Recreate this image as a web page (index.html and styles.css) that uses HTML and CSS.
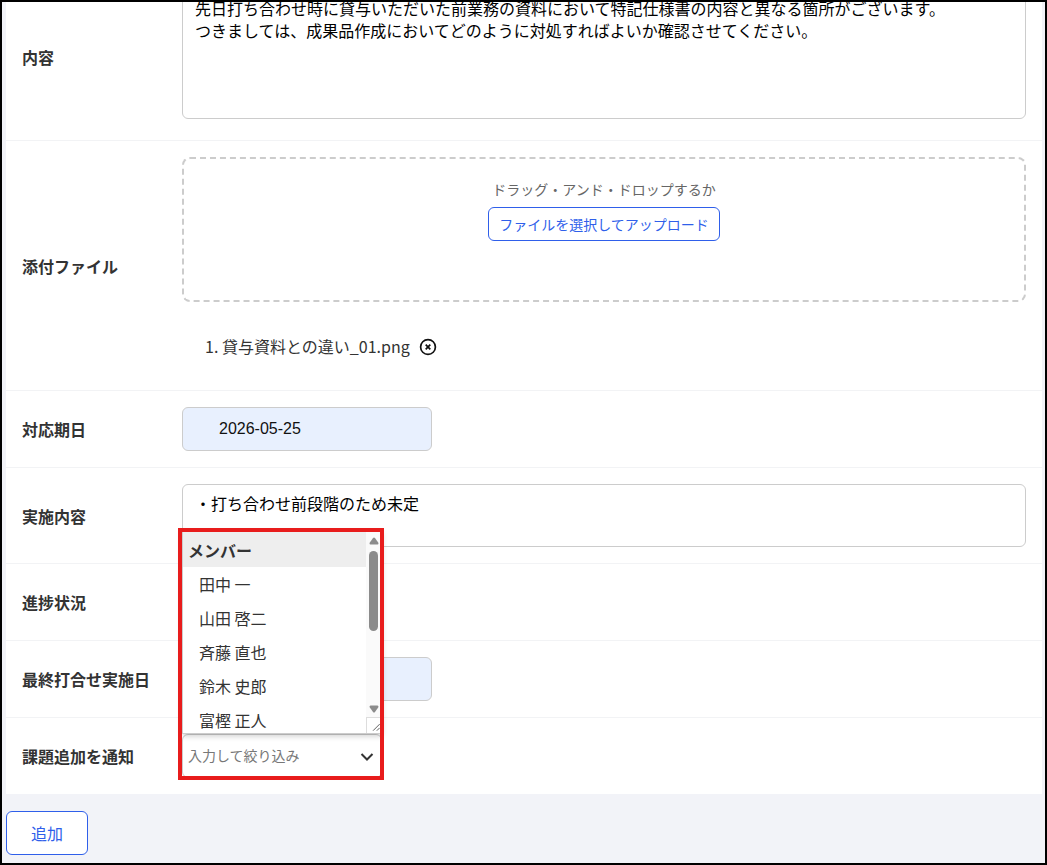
FILE: index.html
```html
<!DOCTYPE html>
<html lang="ja">
<head>
  <meta charset="UTF-8" />
  <meta name="viewport" content="width=device-width, initial-scale=1.0"/>
  <title>課題追加</title>
  <link rel="stylesheet" href="styles.css">
</head>
<body>

  <form class="issue-form">
    <div class="rows">

      <!-- Content -->
      <div class="row row-content">
        <label class="row-label" for="content">内容</label>
        <div class="row-field">
          <textarea id="content" class="text-area text-area-large">先日打ち合わせ時に貸与いただいた前業務の資料において特記仕様書の内容と異なる箇所がございます。
つきましては、成果品作成においてどのように対処すればよいか確認させてください。</textarea>
        </div>
      </div>

      <!-- Attachments -->
      <div class="row">
        <div class="row-label">添付ファイル</div>
        <div class="row-field">
          <div class="drop-zone">
            <span>ドラッグ・アンド・ドロップするか</span>
            <button type="button" class="btn btn-small">ファイルを選択してアップロード</button>
          </div>
          <ol class="file-list">
            <li>貸与資料との違い_01.png<button type="button" class="file-remove" aria-label="削除"><svg width="18" height="18" viewBox="0 0 18 18" fill="none" stroke="#111" stroke-width="1.7"><circle cx="9" cy="9" r="7.4"/><path d="M6.7 6.7l4.6 4.6M11.3 6.7l-4.6 4.6"/></svg></button></li>
          </ol>
        </div>
      </div>

      <!-- Due date -->
      <div class="row">
        <label class="row-label" for="due">対応期日</label>
        <div class="row-field">
          <input id="due" class="date-input" type="text" value="2026-05-25">
        </div>
      </div>

      <!-- Action -->
      <div class="row">
        <label class="row-label" for="action">実施内容</label>
        <div class="row-field">
          <textarea id="action" class="text-area">・打ち合わせ前段階のため未定</textarea>
        </div>
      </div>

      <!-- Progress -->
      <div class="row">
        <div class="row-label">進捗状況</div>
        <div class="row-field"></div>
      </div>

      <!-- Last meeting -->
      <div class="row">
        <label class="row-label" for="meeting">最終打合せ実施日</label>
        <div class="row-field">
          <input id="meeting" class="date-input" type="text">
        </div>
      </div>

      <!-- Notify -->
      <div class="row">
        <label class="row-label" for="notify">課題追加を通知</label>
        <div class="row-field">
          <div class="combo">
            <input id="notify" class="combo-input" type="text" placeholder="入力して絞り込み">
            <svg class="combo-arrow" width="14" height="10" viewBox="0 0 14 10" fill="none" stroke="#333" stroke-width="2"><path d="M1.5 2L7 7.5L12.5 2"/></svg>

            <div class="combo-list">
              <ul role="listbox" aria-label="メンバー">
                <li class="group">メンバー</li>
                <li role="option">田中 一</li>
                <li role="option">山田 啓二</li>
                <li role="option">斉藤 直也</li>
                <li role="option">鈴木 史郎</li>
                <li role="option">富樫 正人</li>
              </ul>
              <div class="scrollbar">
                <svg width="10" height="8" viewBox="0 0 10 8" fill="#8b8b8b"><path d="M4 1Q5 0 6 1L9.5 6Q9.5 7.5 8.5 7.5H1.5Q.5 7.5 .5 6Z"/></svg>
                <div class="thumb"></div>
                <svg width="10" height="8" viewBox="0 0 10 8" fill="#8b8b8b"><path d="M4 7Q5 8 6 7L9.5 2Q9.5 .5 8.5 .5H1.5Q.5 .5 .5 2Z"/></svg>
                <svg class="resizer" width="16" height="16" viewBox="0 0 16 16" fill="none" stroke="#555"><path d="M6.5 13.5L13.5 6.5M10.5 13.5L13.5 10.5"/></svg>
              </div>
            </div>
            <div class="highlight"></div>
          </div>
        </div>
      </div>

    </div>

    <button type="submit" class="btn btn-add">追加</button>
  </form>

</body>
</html>
```

FILE: styles.css
```css
* {
  margin: 0;
  padding: 0;
  box-sizing: border-box;
}

body {
  font-family: "Noto Sans CJK JP", sans-serif;
  font-size: 16px;
  line-height: 24px;
  color: #333;
  background-color: #f2f3f8;
  height: 100vh;
  border: 2px solid #000;
  overflow: hidden;
}

input,
textarea,
button {
  font-family: inherit;
  font-size: 16px;
}

.issue-form {
  margin-top: -28px;
  padding: 0 3px 0 4px;
}

.rows {
  background-color: #fff;
}

.row {
  display: grid;
  grid-template-columns: 160px 1fr;
  align-items: center;
  min-height: 77px;
  padding: 16px;
  border-bottom: 1px solid #f2f3f5;
}

.row:last-child {
  min-height: 76px;
  border-bottom: none;
}

.row-label {
  font-weight: bold;
}

.row-content .row-field {
  padding-bottom: 5px;
}

/* Fields */
.text-area {
  display: block;
  width: 100%;
  height: 63px;
  padding: 7px 12px;
  border: 1px solid #ccc;
  border-radius: 6px;
  line-height: 22px;
  color: #000;
  background-color: #fff;
  resize: none;
  overflow: hidden;
}

.text-area-large {
  height: 129px;
  padding: 6px 12px;
}

.date-input {
  display: block;
  width: 250px;
  height: 44px;
  padding: 0 36px;
  border: 1px solid #ccc;
  border-radius: 6px;
  background-color: #e8f0fe;
  font-family: "Liberation Sans", Arial, sans-serif;
  color: #111;
}

.drop-zone {
  display: flex;
  flex-direction: column;
  align-items: center;
  gap: 6px;
  height: 145px;
  padding-top: 18px;
  border: 2px dashed #ccc;
  border-radius: 8px;
  font-size: 14px;
  color: #666;
}

.file-list {
  margin: 32px 0 16px;
  padding-left: 40px;
}

.file-remove {
  margin-left: 9px;
  border: none;
  background: none;
  vertical-align: -3px;
  line-height: 0;
  cursor: pointer;
}

.file-remove svg {
  display: block;
}

/* Buttons */
.btn {
  border: 1px solid #2f5fea;
  border-radius: 6px;
  background-color: #fff;
  color: #2f5fea;
  cursor: pointer;
}

.btn-small {
  height: 34px;
  padding: 0 10px;
  font-size: 14px;
}

.btn-add {
  display: block;
  width: 82px;
  height: 44px;
  margin-top: 17px;
}

/* Member picker */
.combo {
  position: relative;
  width: 200px;
}

.combo-input {
  display: block;
  width: 100%;
  height: 44px;
  padding: 0 32px 2px 5px;
  border: 1px solid #ccc;
  border-radius: 6px;
  background-color: #fff;
  font-size: 14px;
}

.combo-input::placeholder {
  color: #777;
}

.combo-arrow {
  position: absolute;
  top: 18px;
  right: 8px;
}

.combo-list {
  position: absolute;
  left: 0;
  bottom: 44px;
  display: flex;
  width: 200px;
  height: 203px;
  border: 1px solid #ccc;
  background-color: #fff;
  box-shadow: 0 2px 6px rgba(0, 0, 0, 0.2);
  overflow: hidden;
}

.combo-list ul {
  flex: 1;
  list-style: none;
}

.combo-list li {
  height: 34px;
  padding-left: 16px;
  line-height: 34px;
}

.combo-list .group {
  height: 35px;
  padding-left: 5px;
  background-color: #eee;
  line-height: 36px;
  font-weight: bold;
}

.scrollbar {
  display: flex;
  flex-direction: column;
  align-items: center;
  width: 15px;
  padding-top: 5px;
  background-color: #fafafa;
}

.thumb {
  width: 9px;
  height: 80px;
  margin: 6px 0 auto;
  border-radius: 5px;
  background-color: #8b8b8b;
}

.resizer {
  margin-top: 4px;
  border-top: 1px solid #ddd;
  border-left: 1px solid #ddd;
  background-color: #fff;
}

.highlight {
  position: absolute;
  left: -4px;
  bottom: -2px;
  width: 206px;
  height: 252px;
  border: 4px solid #e81c1c;
  pointer-events: none;
}
```
